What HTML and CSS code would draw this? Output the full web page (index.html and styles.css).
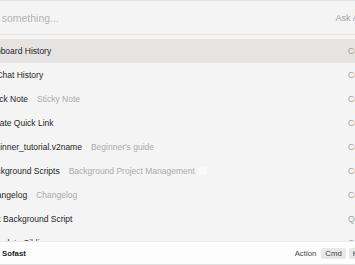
FILE: index.html
```html
<!DOCTYPE html>
<html lang="en">
<head>
    <meta charset="UTF-8">
    <meta name="viewport" content="width=device-width, initial-scale=1.0">
    <title>Sofast</title>
    <link rel="stylesheet" href="styles.css">
</head>
<body>
    <div class="window">
        <div class="search">
            <span class="search-icon"></span>
            <span class="placeholder">Type something...</span>
            <span class="ask">Ask AI</span>
        </div>

        <div class="list">
            <div class="row selected">
                <span class="icon"></span>
                <span class="title">Clipboard History</span>
                <span class="kind">Command</span>
            </div>
            <div class="row">
                <span class="icon"></span>
                <span class="title">AI Chat History</span>
                <span class="kind">Command</span>
            </div>
            <div class="row">
                <span class="icon"></span>
                <span class="title">Quick Note</span>
                <span class="sub">Sticky Note</span>
                <span class="kind">Command</span>
            </div>
            <div class="row">
                <span class="icon"></span>
                <span class="title">Create Quick Link</span>
                <span class="kind">Command</span>
            </div>
            <div class="row">
                <span class="icon"></span>
                <span class="title">beginner_tutorial.v2name</span>
                <span class="sub">Beginner's guide</span>
                <span class="kind">Command</span>
            </div>
            <div class="row">
                <span class="icon"></span>
                <span class="title">Background Scripts</span>
                <span class="sub">Background Project Management</span>
                <span class="tag"></span>
                <span class="kind">Command</span>
            </div>
            <div class="row">
                <span class="icon"></span>
                <span class="title">Changelog</span>
                <span class="sub">Changelog</span>
                <span class="kind">Command</span>
            </div>
            <div class="row">
                <span class="icon"></span>
                <span class="title">Edit Background Script</span>
                <span class="kind">Quicklink</span>
            </div>
            <div class="row">
                <span class="icon"></span>
                <span class="title">Translate Sibling</span>
                <span class="kind">Command</span>
            </div>
        </div>

        <div class="footer">
            <span class="logo"></span>
            <span class="brand">Sofast</span>
            <span class="action">Action</span>
            <span class="key">Cmd</span>
            <span class="key">K</span>
        </div>
    </div>
</body>
</html>
```

FILE: styles.css
```css
html, body {
    margin: 0;
    padding: 0;
    overflow: hidden;
}
body {
    width: 355px;
    height: 265px;
    background: #f4f4f4;
    font-family: "Liberation Sans", Arial, sans-serif;
    color: #262626;
}
.window {
    width: 441px;
    margin-left: -44px;
    height: 265px;
    display: flex;
    flex-direction: column;
    background: #f4f4f4;
    border-top: 1px solid #e4e4e4;
    box-sizing: border-box;
}

/* search bar */
.search {
    height: 34px;
    flex: none;
    display: flex;
    align-items: center;
    padding: 0 36px 0 20px;
    border-bottom: 1px solid #e2e2e2;
    box-sizing: border-box;
}
.search-icon {
    width: 0;
}
.placeholder {
    flex: 1;
    font-size: 10.5px;
    color: #b4b4b4;
    padding-top: 1px;
}
.ask {
    font-size: 9px;
    color: #a0a0a0;
}

/* results */
.list {
    height: 206px;
    flex: none;
    overflow: hidden;
    padding-top: 4px;
    box-sizing: border-box;
}
.row {
    height: 24px;
    display: flex;
    align-items: center;
    padding: 0 10px;
    font-size: 8.5px;
}
.row.selected {
    background: #e5e4e2;
}
.icon {
    width: 14px;
    height: 14px;
    margin-right: 6px;
    border-radius: 3px;
    background: #d8d8d8;
}
.title {
    color: #262626;
}
.sub {
    margin-left: 9px;
    color: #ababab;
}
.tag {
    width: 9px;
    height: 8px;
    margin-left: 3px;
    border-radius: 3px;
    background: #fafafa;
}
.kind {
    margin-left: auto;
    width: 39px;
    color: #a2a2a2;
}

/* footer */
.footer {
    flex: 1;
    display: flex;
    align-items: center;
    padding: 0 32px 0 20px;
    background: #fdfdfd;
    border-top: 1px solid #ececec;
    border-bottom: 1px solid #e0e0e0;
    font-size: 7.8px;
}
.logo {
    width: 16px;
    margin-right: 10px;
}
.brand {
    font-weight: bold;
    color: #222;
}
.action {
    margin-left: auto;
    margin-right: 5px;
    color: #444;
}
.key {
    height: 11px;
    line-height: 11px;
    padding: 0 4px;
    margin-right: 3px;
    border-radius: 2px;
    background: #e8e8e8;
    color: #444;
}
```
